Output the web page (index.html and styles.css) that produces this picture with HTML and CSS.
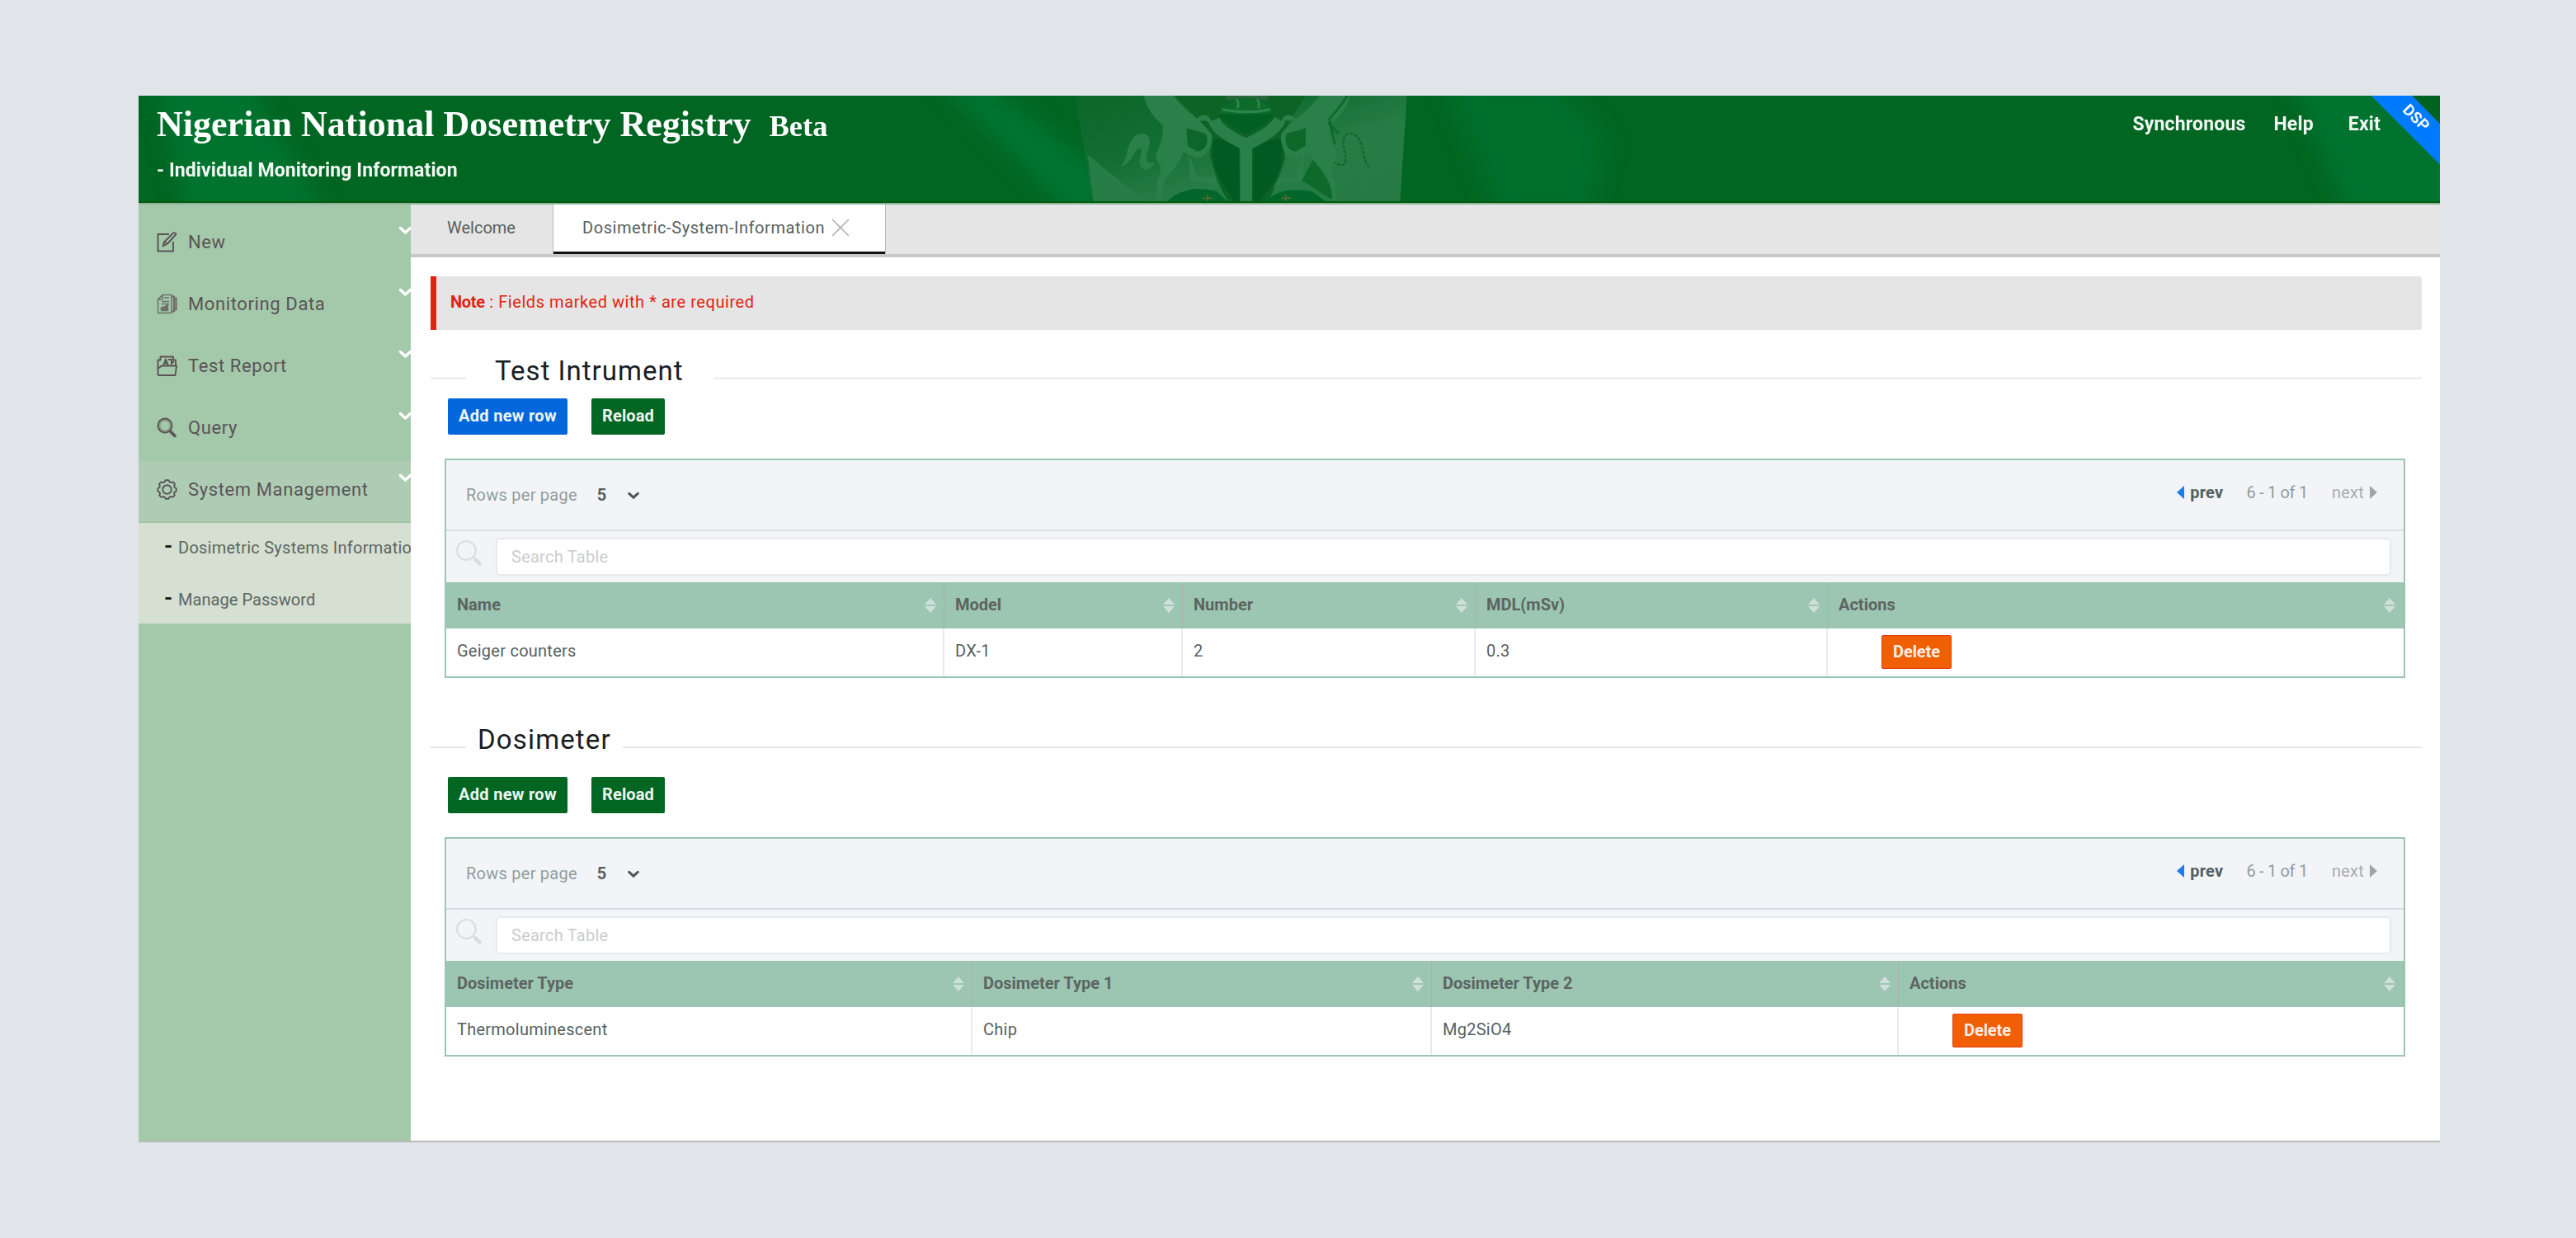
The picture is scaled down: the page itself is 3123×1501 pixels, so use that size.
FILE: index.html
```html
<!DOCTYPE html>
<html lang="en">
<head>
<meta charset="utf-8">
<title>Nigerian National Dosemetry Registry</title>
<link rel="stylesheet" href="styles.css">
</head>
<body>
<svg class="defs" width="0" height="0">
  <symbol id="lens" viewBox="0 0 30 30"><ellipse cx="12" cy="12" rx="11" ry="11" fill="none" stroke="currentColor" stroke-width="2"/><path d="M20 20l2 2" stroke="currentColor" stroke-width="2"/><path d="M22.500 22.500l5 5" stroke="currentColor" stroke-width="4.500" stroke-linecap="round"/></symbol>
  <symbol id="sort" viewBox="0 0 14 18"><path d="M7 0l7 8H0zM7 18l7-8H0z" fill="currentColor"/></symbol>
  <symbol id="chev" viewBox="0 0 16 11"><path d="M2 2.500l6 5.500 6-5.500" fill="none" stroke="currentColor" stroke-width="3.400" stroke-linecap="round"/></symbol>
</svg>
<div class="app">
  <header class="header">
    <svg class="backdrop" viewBox="0 0 2790 130" preserveAspectRatio="none" aria-hidden="true">
      <defs>
        <filter id="soft" x="-20%" y="-50%" width="140%" height="200%"><feGaussianBlur stdDeviation="12"/></filter>
        <filter id="soft2"><feGaussianBlur stdDeviation="1"/></filter>
        <linearGradient id="shade" x1="0" x2="1" y1="0" y2="1"><stop offset="0" stop-color="#0b6629"/><stop offset=".35" stop-color="#126e33"/><stop offset=".6" stop-color="#257c44"/><stop offset="1" stop-color="#257b43"/></linearGradient>
      </defs>
      <g filter="url(#soft)" fill="#057531">
        <path d="M20 -20H130L230 150H60z" opacity=".9"/>
        <path d="M970 -20h50l150 115v60h-30z"/>
        <path d="M1580 -20h140l60 75-20 95h-110z" opacity=".6"/>
        <path d="M2610 -20h220v170h-150z" opacity=".9"/>
      </g>
      <g transform="translate(1122 -4) scale(.33333)">
        <path d="M38 12H1247L1222 402H108z" fill="url(#shade)"/>
        <g filter="url(#soft2)">
          <path d="M400 12H880L830 90 790 160 805 240 770 340 740 402H600L560 330 530 230 540 160 470 80z" fill="#0a6428"/>
          <path d="M85 225L300 402H108z" fill="#267d45"/>
          <path d="M205 270C235 250 225 150 285 150 335 155 300 215 300 240 300 262 318 260 330 255 315 295 275 285 275 255 275 230 290 205 275 205 255 205 245 265 205 270z" fill="#2a8049"/>
          <path d="M1110 270C1080 250 1095 150 1040 150 995 155 1025 215 1025 240 1025 275 1000 265 985 255" fill="none" stroke="#0d6a2c" stroke-width="7" stroke-dasharray="12 5"/>
          <path d="M290 12H400C430 60 500 100 535 150 545 185 525 235 480 240L455 225 480 300 490 310H550L570 350C540 325 500 325 460 325L455 230 435 215 425 240C400 285 370 300 358 345L352 402H335L340 320C365 280 345 260 335 240 330 225 362 180 360 120 330 95 300 60 290 12z" fill="#2a8049"/>
          <path d="M445 130L515 150C530 180 515 210 485 215L450 195z" fill="#08662a"/>
          <path d="M1040 12H930C900 60 830 100 790 150 785 185 800 235 845 240L865 225 845 300 835 310H780L760 350C790 325 820 325 870 325L875 230 895 215 905 240C930 285 955 300 967 345L973 402H990L985 320C960 280 980 260 990 240 1000 225 965 180 965 120 995 95 1030 60 1040 12z" fill="#2a8049"/>
          <path d="M880 130L810 150C798 180 810 210 840 215L878 195z" fill="#0a682c"/>
          <path d="M905 245L865 320 975 390C975 340 955 300 905 245z" fill="#0b6a2c"/>
          <path d="M1030 12Q1000 60 965 95L985 190M1000 150L960 110" fill="none" stroke="#0d6a2c" stroke-width="8"/>
          <path d="M545 170C570 165 610 185 635 205L640 402H625C575 340 520 250 545 170z" fill="#005a20"/>
          <path d="M785 170C760 165 720 185 690 205L687 402H705C765 340 815 250 785 170z" fill="#005a20"/>
          <path d="M560 80H765L730 115 662 150 600 115z" fill="#005e20"/>
          <path d="M545 100C560 140 610 165 662 190V402M785 100C765 140 715 165 662 190" fill="none" stroke="#2a8049" stroke-width="44" stroke-linejoin="round"/>
          <path d="M480 100C510 60 545 100 530 110C510 95 490 110 480 100zM845 100C815 60 780 100 795 110C815 95 835 110 845 100z" fill="#2a8049"/>
          <path d="M565 75C590 10 730 10 762 72Q660 90 565 75z" fill="#086c2c"/>
          <path d="M575 62Q665 80 750 62M625 20Q640 40 630 58M700 20Q715 40 705 58" fill="none" stroke="#2f854e" stroke-width="9"/>
          <path d="M590 12H740V30Q665 14 590 30z" fill="#28673a"/>
          <path d="M370 402Q440 330 555 360L600 402zM730 402Q780 340 900 360L960 402z" fill="#02662a"/>
          <path d="M505 385h35M522 372v25M790 385h35M806 372v25" stroke="#4b6a30" stroke-width="6"/>
        </g>
      </g>
      <path d="M0 129H2790" stroke="#005c0c" stroke-width="2"/>
      <path d="M2706.700 0H2756.500L2790 34V83.500z" fill="#007bff"/>
      <path d="M2756.500 0H2790V34z" fill="#006222"/>
    </svg>
    <div class="brand">
      <h1>Nigerian National Dosemetry Registry<small>Beta</small></h1>
      <p>- Individual Monitoring Information</p>
    </div>
    <nav class="topnav"><a>Synchronous</a><a>Help</a><a>Exit</a></nav>
    <span class="ribbon">DSP</span>
  </header>
  <div class="body">
    <aside class="sidebar">
      <div class="item"><svg class="ico" viewBox="0 0 25 25"><path d="M15 3H1.500V23.500H20V12" /><path d="M7.500 17.500L9 12.500 20 1.500Q22 .5 23.500 3L13 14.500zM9 12.500L13 14.500"/></svg><span>New</span><svg class="chev"><use href="#chev"/></svg></div>
      <div class="item"><svg class="ico faded" viewBox="0 0 25 25"><path d="M7 1.500H18V23.500H1.500V7zM7 1.500V7H1.500M9 5h6M6 9.500h9M6 12.500h9" /><path d="M5.500 20.500V17l4-1 4-2.500v7z" fill="currentColor"/><path d="M18 3.500h3v18h-3M21 5.500h2.500v14H21" stroke-width="2.200"/></svg><span>Monitoring Data</span><svg class="chev"><use href="#chev"/></svg></div>
      <div class="item"><svg class="ico" viewBox="0 0 25 25"><path d="M1.500 24V5.500h3V1.500H20v4h3V12M1.500 24H22.500L24 12.500H6L1.500 16M8 12.500L11 4.500l3 8M9.500 9.500h4M14 5h4v7M17 8h4"/></svg><span>Test Report</span><svg class="chev"><use href="#chev"/></svg></div>
      <div class="item"><svg class="ico" viewBox="0 0 25 25"><circle cx="10" cy="10" r="8.500"/><circle cx="10" cy="10" r="6.500" opacity=".4"/><path d="M16 16.500l7 7" stroke-width="3.600"/></svg><span>Query</span><svg class="chev"><use href="#chev"/></svg></div>
      <div class="item active"><svg class="ico" viewBox="0 0 25 25"><path d="M10.500 1.300h4l1.200 2.200 1.600.7 2.400-.8 2.300 2.600-.9 2.500.6 1.500 2 1.200v3.200l-2 1.300-.7 1.500.8 2.400-2.500 2.300-2.300-.8-1.500.6-1.200 2h-3.600l-1.200-2-1.500-.6-2.300.8-2.500-2.300.8-2.400-.7-1.500-2-1.300v-3.200l2-1.200.6-1.500-.9-2.500 2.300-2.600 2.400.8 1.600-.7z"/><circle cx="12.500" cy="12.500" r="5.300"/></svg><span>System Management</span><svg class="chev"><use href="#chev"/></svg></div>
      <div class="submenu"><a><i>-</i>Dosimetric Systems Information</a><a><i>-</i>Manage Password</a></div>
    </aside>
    <main class="main">
      <div class="tabs">
        <div class="tab">Welcome</div>
        <div class="tab current">Dosimetric-System-Information<svg class="close" viewBox="0 0 22 22"><path d="M1 1l20 20M21 1L1 21"/></svg></div>
      </div>
      <div class="note"><b>Note</b> : Fields marked with * are required</div>

      <section>
        <div class="legend first"><h2>Test Intrument</h2></div>
        <div class="buttons"><button class="btn blue">Add new row</button><button class="btn reload">Reload</button></div>
        <div class="table">
          <div class="bar"><span>Rows per page</span><b>5</b><svg class="pick" viewBox="0 0 16 11"><use href="#chev"/></svg>
            <div class="pager"><i class="tri prev"></i><b>prev</b><span class="range">6 - 1 of 1</span><span class="next">next</span><i class="tri"></i></div></div>
          <div class="search"><svg class="lens"><use href="#lens"/></svg><input type="text" placeholder="Search Table"></div>
          <div class="row head instruments"><div>Name<svg><use href="#sort"/></svg></div><div>Model<svg><use href="#sort"/></svg></div><div>Number<svg><use href="#sort"/></svg></div><div>MDL(mSv)<svg><use href="#sort"/></svg></div><div>Actions<svg><use href="#sort"/></svg></div></div>
          <div class="row instruments"><div>Geiger counters</div><div>DX-1</div><div>2</div><div>0.3</div><div class="act"><button class="delete">Delete</button></div></div>
        </div>
      </section>

      <section class="second">
        <div class="legend"><h2>Dosimeter</h2></div>
        <div class="buttons"><button class="btn">Add new row</button><button class="btn reload">Reload</button></div>
        <div class="table">
          <div class="bar"><span>Rows per page</span><b>5</b><svg class="pick" viewBox="0 0 16 11"><use href="#chev"/></svg>
            <div class="pager"><i class="tri prev"></i><b>prev</b><span class="range">6 - 1 of 1</span><span class="next">next</span><i class="tri"></i></div></div>
          <div class="search"><svg class="lens"><use href="#lens"/></svg><input type="text" placeholder="Search Table"></div>
          <div class="row head dosimeters"><div>Dosimeter Type<svg><use href="#sort"/></svg></div><div>Dosimeter Type 1<svg><use href="#sort"/></svg></div><div>Dosimeter Type 2<svg><use href="#sort"/></svg></div><div>Actions<svg><use href="#sort"/></svg></div></div>
          <div class="row dosimeters"><div>Thermoluminescent</div><div>Chip</div><div>Mg2SiO4</div><div class="act"><button class="delete">Delete</button></div></div>
        </div>
      </section>
    </main>
  </div>
</div>
</body>
</html>
```
FILE: styles.css
```css
* { box-sizing: border-box; }
body {
  margin: 0;
  height: 1501px;
  padding: 116px 165px 0 168px;
  background: #e1e5ea;
  font: 20px "Roboto", sans-serif;
  letter-spacing: .25px;
  color: #56615f;
  overflow: hidden;
}
.defs { position: absolute; }
h1, h2, p { margin: 0; }
button, input { font: inherit; letter-spacing: inherit; border: 0; }
.app { width: 2790px; height: 1269px; display: flex; flex-direction: column; border-bottom: 2px solid #b9b9b9; }

/* Header */
.header {
  position: relative;
  height: 132px;
  flex: none;
  display: flex;
  justify-content: space-between;
  padding: 0 72px 0 22px;
  background: #006622;
  border-bottom: 2px solid #8fb39c;
  color: #f2f7f3;
  overflow: hidden;
}
.backdrop { position: absolute; left: 0; top: 0; width: 2790px; height: 130px; }
.brand, .topnav { position: relative; }
.brand h1 {
  font: bold 44px/70px "Liberation Serif", serif;
  letter-spacing: .02px;
  color: #fff;
  white-space: nowrap;
}
.brand h1 small { font-size: 36.500px; margin-left: 22px; }
.brand p { margin-top: 4px; font-size: 23px; line-height: 30px; font-weight: 700; letter-spacing: .1px; }
.topnav { display: flex; gap: 34px; font-size: 23px; line-height: 70px; font-weight: 700; letter-spacing: .17px; }
.topnav a:last-child { margin-left: 8px; }
.ribbon {
  position: absolute;
  left: 2736px;
  top: 15px;
  width: 50px;
  line-height: 24px;
  text-align: center;
  transform: rotate(45deg);
  font-size: 19px;
  font-weight: 700;
}

/* Sidebar */
.body { display: flex; flex: 1; min-height: 0; }
.sidebar { width: 330px; flex: none; padding-top: 11px; background: #a4c8aa; overflow: hidden; }
.item {
  height: 75px;
  display: flex;
  align-items: center;
  padding: 0 0 6px 22px;
  font-size: 22px;
  letter-spacing: .62px;
  color: #5a5456;
}
.item span { flex: 1; padding-left: 13px; white-space: nowrap; }
.item.active { background: #aeccb4; box-shadow: inset 0 -2px #a2c5a8; }
.ico { width: 25px; height: 25px; fill: none; stroke: currentColor; stroke-width: 1.900; stroke-linejoin: round; overflow: visible; }
.ico.faded { opacity: .75; stroke-width: 1.500; }
.item .chev { width: 17px; height: 11px; margin: -29px -2px 0 0; color: #fff; }
.submenu { height: 122px; padding-top: 5px; background: #d5dfd2; color: #5c6662; }
.submenu a { display: flex; height: 63px; line-height: 50px; padding-left: 31px; white-space: nowrap; }
.submenu a:last-child { letter-spacing: .06px; }
.submenu i { flex: none; width: 17px; font: bold 26px/46px "Roboto", sans-serif; color: #1c1c1c; }

/* Main area */
.main { flex: 1; min-width: 0; background: #fff; padding-right: 22px; }
.tabs { display: flex; height: 64px; margin-right: -22px; background: #e5e5e5; border-bottom: 4px solid #c8c8c8; }
.tab { width: 172px; padding-left: 44px; line-height: 56px; letter-spacing: 0; }
.tab.current {
  width: 404px;
  display: flex;
  align-items: center;
  padding-left: 35px;
  background: #fff;
  border: solid #b8b8b8;
  border-width: 0 1px;
  box-shadow: inset 0 -3px #111;
  letter-spacing: .56px;
  padding-bottom: 5px;
}
.close { width: 22px; height: 22px; margin-left: 8px; stroke: #b5b5b5; stroke-width: 1.700; }
.note {
  height: 65px;
  margin: 23px 0 0 24px;
  padding-left: 17px;
  line-height: 63px;
  background: #e5e5e5;
  border-left: 7px solid #e42212;
  border-radius: 0 3px 3px 0;
  color: #e42212;
  letter-spacing: .56px;
}
.note b { letter-spacing: -.3px; }

section { padding-left: 24px; }
.legend { display: flex; height: 40px; }
.legend h2 { font-size: 33px; line-height: 40px; font-weight: 400; color: #1a1e22; letter-spacing: 1.15px; }
.legend::before, .legend::after { content: ""; height: 2px; margin-top: 28px; background: #e5e7ea; }
.legend::before { width: 43px; margin-right: 14px; }
.legend::after { flex: 1; margin-left: 14px; }
.legend.first { margin-top: 30px; }
.legend.first::before { margin-right: 35px; }
.legend.first::after { margin-left: 37px; }
.legend.first::before, .legend.first::after { background: #eff0f5; margin-top: 27px; height: 3px; }
.legend.first h2 { letter-spacing: 1px; }
.second .legend { margin-top: 55px; }

.buttons { display: flex; gap: 29px; margin: 13px 0 29px 21px; }
.second .buttons { margin-top: 25px; }
.btn {
  width: 145px;
  height: 44px;
  padding: 0 0 3px;
  background: #006622;
  border-radius: 2px;
  color: #eef4ef;
  font-weight: 700;
  letter-spacing: .3px;
}
.btn.blue { background: #0267dd; }
.btn.reload { width: 89px; letter-spacing: .14px; }

/* Tables */
.table { width: 2377px; margin-left: 17px; border: 2px solid #9cc6b2; }
.bar {
  display: flex;
  align-items: center;
  height: 86px;
  padding-left: 24px;
  background: #f3f4f8;
  border-bottom: 2px solid #d6dfe1;
  color: #8f9e9c;
}
.bar b { margin-left: 24px; color: #56615f; }
.pick { width: 14px; height: 10px; margin: 2px 0 0 25px; color: #4d5856; }
.pager { margin-left: auto; display: flex; align-items: center; padding: 0 32px 6px 0; }
.pager b { margin: 0 0 0 7px; }
.pager .range { margin-left: 28px; letter-spacing: -.3px; }
.pager .next { margin: 0 7px 0 29px; color: #a9aeac; }
.tri { border: solid transparent; border-width: 8px 0 8px 9px; border-left-color: #a2a5a5; }
.tri.prev { border-width: 8px 9px 8px 0; border-right-color: #1c7cf0; }
.search { display: flex; height: 62px; padding: 8px 15px 0 12px; background: #f3f4f8; }
.lens { width: 31px; height: 31px; margin-top: 3px; color: #d5dfe0; }
.search input {
  flex: 1;
  height: 46px;
  margin-left: 17px;
  padding: 0 0 1px 17px;
  background: #fff;
  border: 2px solid #e6e9ee;
  border-radius: 5px;
  color: #56615f;
}
.search input::placeholder { color: #c9cdcd; opacity: 1; }
.row { display: grid; height: 58px; }
.row.instruments { grid-template-columns: 604px 289px 355px 427px 1fr; }
.row.dosimeters { grid-template-columns: 638px 557px 566px 1fr; }
.row > div { display: flex; align-items: center; padding: 0 0 5px 13px; border-right: 2px solid #e8eaef; }
.row > div:last-child { border-right: 0; }
.row.head { height: 56px; background: #9cc6b2; color: #5c6562; font-weight: 700; letter-spacing: 0; }
.row.head > div { justify-content: space-between; padding: 0 9px 2px 13px; border-right: 1px solid #a9b3a8; }
.row.head svg { width: 14px; height: 18px; margin-top: 2px; color: #cfe0dc; }
.row > .act { padding: 0 0 1px 65px; }
.delete {
  width: 85px;
  height: 41px;
  padding: 0 0 2px;
  background: #f15f05;
  border: 1px solid #ea3b0c;
  border-radius: 2px;
  color: #fbeee6;
  font-weight: 700;
  letter-spacing: -.08px;
}
```
